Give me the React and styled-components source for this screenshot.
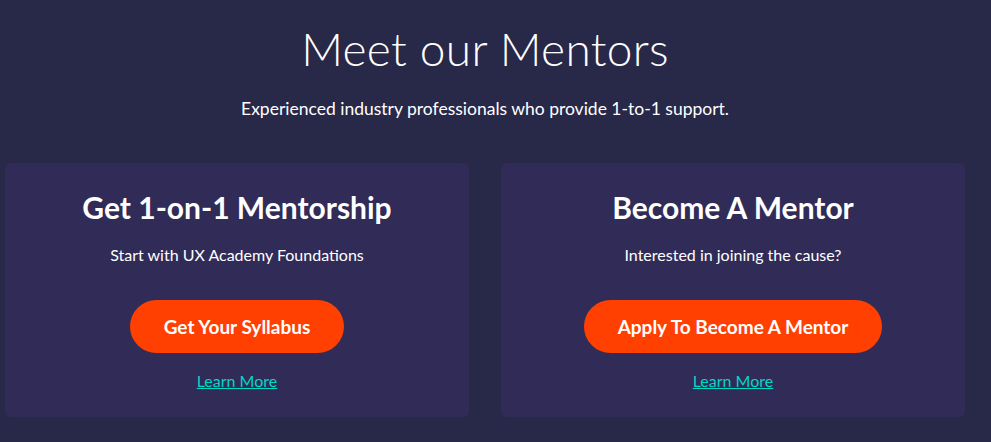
import React from 'react';
import styled, { createGlobalStyle } from 'styled-components';

const GlobalStyle = createGlobalStyle`
    body {
        margin: 0;
        background: #282848;
        font-family: Lato, "Open Sans", sans-serif;
        color: #fff;
    }
`;

const cards = [
    {
        title: 'Get 1-on-1 Mentorship',
        text: 'Start with UX Academy Foundations',
        button: 'Get Your Syllabus',
    },
    {
        title: 'Become A Mentor',
        text: 'Interested in joining the cause?',
        button: 'Apply To Become A Mentor',
    },
];

function App() {
    return (
        <>
            <GlobalStyle />
            <Section>
                <Heading>Meet our Mentors</Heading>
                <Intro>Experienced industry professionals who provide 1-to-1 support.</Intro>
                <CardGrid>
                    {cards.map(card => (
                        <Card key={card.title}>
                            <CardTitle>{card.title}</CardTitle>
                            <CardText>{card.text}</CardText>
                            <CtaButton>{card.button}</CtaButton>
                            <LearnMore href="#">Learn More</LearnMore>
                        </Card>
                    ))}
                </CardGrid>
            </Section>
        </>
    );
}

export default App;

const Section = styled.section`
    width: 960px;
    margin-left: 5px;
    padding-top: 20px;
    display: flex;
    flex-direction: column;
    align-items: center;
`;

const Heading = styled.h1`
    margin: 0;
    font-size: 46px;
    font-weight: 300;
    line-height: 58px;
    letter-spacing: 0.3px;
`;

const Intro = styled.p`
    margin: 19px 0 0;
    font-size: 17.5px;
    line-height: 24px;
`;

const CardGrid = styled.div`
    margin-top: 42px;
    width: 100%;
    display: grid;
    grid-template-columns: 1fr 1fr;
    gap: 32px;
`;

const Card = styled.div`
    background: #312b57;
    border-radius: 6px;
    height: 254px;
    box-sizing: border-box;
    padding-top: 25px;
    display: flex;
    flex-direction: column;
    align-items: center;
`;

const CardTitle = styled.h2`
    margin: 0;
    font-size: 30px;
    font-weight: 700;
    line-height: 38px;
`;

const CardText = styled.p`
    margin: 19px 0 0;
    font-size: 16px;
    line-height: 20px;
`;

const CtaButton = styled.button`
    margin-top: 35px;
    height: 53px;
    padding: 0 34px;
    border: none;
    border-radius: 27px;
    background: #ff4000;
    color: #fff;
    font-family: inherit;
    font-size: 19px;
    font-weight: 700;
`;

const LearnMore = styled.a`
    margin-top: 18px;
    color: #00d8c8;
    font-size: 16px;
    line-height: 20px;
    text-decoration: underline;
`;
